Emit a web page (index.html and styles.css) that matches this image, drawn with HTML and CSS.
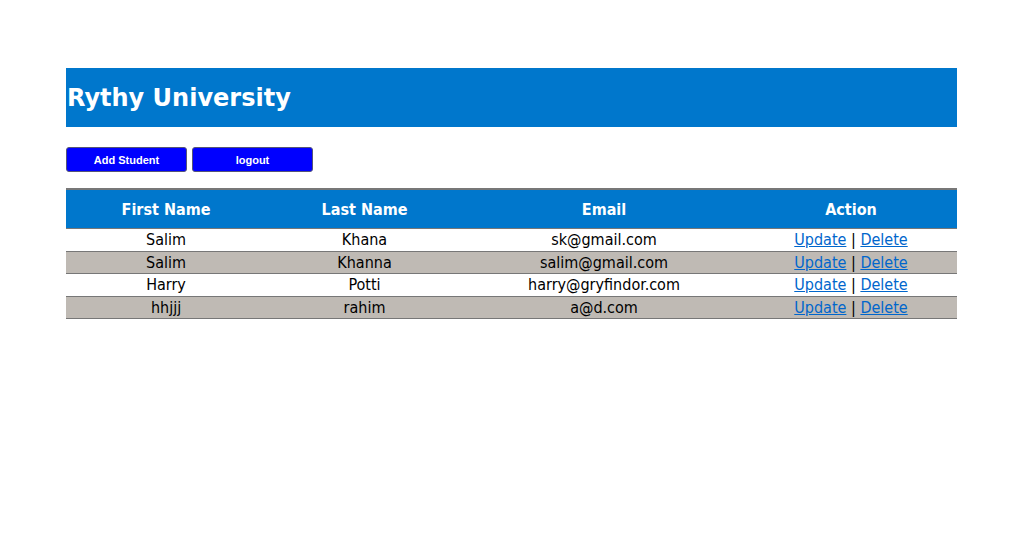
FILE: index.html
```html
<!DOCTYPE html>
<html>
<head>
<meta charset="utf-8">
<link rel="stylesheet" href="styles.css">
</head>
<body>
<div class="page">
  <header class="banner"><h1 class="title">Rythy University</h1></header>
  <div class="actions">
    <button class="btn">Add Student</button>
    <button class="btn">logout</button>
  </div>
  <table class="grid">
    <thead>
      <tr><th class="c1">First Name</th><th class="c2">Last Name</th><th class="c3">Email</th><th class="c4">Action</th></tr>
    </thead>
    <tbody>
      <tr><td>Salim</td><td>Khana</td><td>sk@gmail.com</td><td><a href="#">Update</a> | <a href="#">Delete</a></td></tr>
      <tr class="alt"><td>Salim</td><td>Khanna</td><td>salim@gmail.com</td><td><a href="#">Update</a> | <a href="#">Delete</a></td></tr>
      <tr><td>Harry</td><td>Potti</td><td>harry@gryfindor.com</td><td><a href="#">Update</a> | <a href="#">Delete</a></td></tr>
      <tr class="alt"><td>hhjjj</td><td>rahim</td><td>a@d.com</td><td><a href="#">Update</a> | <a href="#">Delete</a></td></tr>
    </tbody>
  </table>
</div>
</body>
</html>
```
FILE: styles.css
```css
html, body { margin: 0; padding: 0; background: #fff; }
.page {
  width: 891px;
  margin: 68px 0 0 66px;
  font-family: "DejaVu Sans Condensed", "DejaVu Sans", sans-serif;
}
.banner {
  background: #0077cc;
  height: 59px;
  display: flex;
  align-items: center;
}
.title {
  margin: 0 0 0 1px;
  color: #fff;
  font-family: "DejaVu Sans", Verdana, sans-serif;
  font-weight: bold;
  font-size: 24px;
}
.actions {
  display: flex;
  gap: 5px;
  margin-top: 20px;
}
.btn {
  width: 121px;
  height: 25px;
  background: #0000ff;
  color: #fff;
  border: 1px solid #555577;
  border-radius: 3px;
  font-family: "Liberation Sans", Arial, sans-serif;
  font-weight: bold;
  font-size: 11px;
  padding: 0;
}
.grid {
  width: 891px;
  margin-top: 16px;
  border-collapse: collapse;
  font-size: 16px;
  color: #000;
}
.grid th {
  background: #0077cc;
  color: #fff;
  height: 38px;
  font-weight: bold;
  border-top: 2px solid #777;
  border-bottom: 1px solid #777;
  padding: 0;
}
.c1 { width: 200px; }
.c2 { width: 197px; }
.c3 { width: 282px; }
.c4 { width: 212px; }
.grid td {
  text-align: center;
  padding: 0;
  height: 21.5px;
  line-height: 21px;
  border-bottom: 1px solid #777;
}
.grid tr.alt td { background: #bfbab4; }
.grid a { color: #0066cc; }
```
